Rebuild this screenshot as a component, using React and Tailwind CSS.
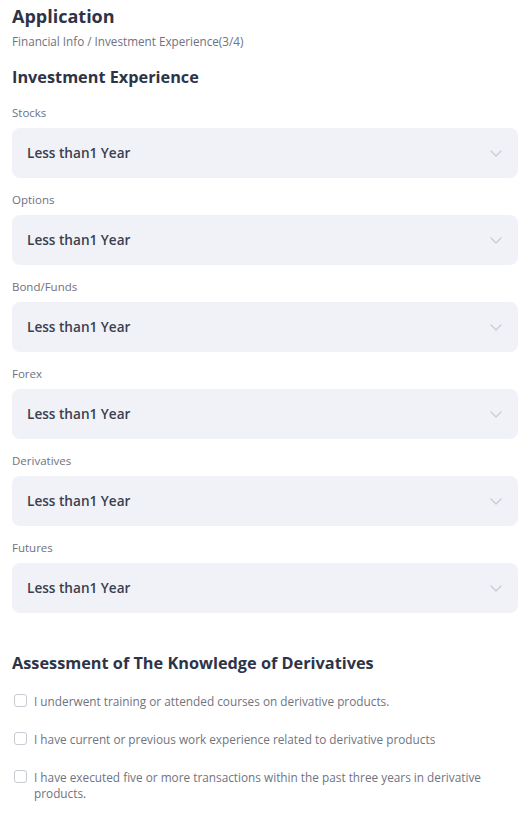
import React from "react";

const fields = ["Stocks", "Options", "Bond/Funds", "Forex", "Derivatives", "Futures"];
const checks = [
  "I underwent training or attended courses on derivative products.",
  "I have current or previous work experience related to derivative products",
  "I have executed five or more transactions within the past three years in derivative products.",
];

function Chevron() {
  return (
    <svg width="12" height="7" viewBox="0 0 12 7" fill="none">
      <path d="M1 1l5 5 5-5" stroke="#c9cbd3" strokeWidth="1.2" strokeLinecap="round" strokeLinejoin="round" />
    </svg>
  );
}

export default function App() {
  return (
    <div className="w-[528px] min-h-[815px] bg-white px-3 pt-[3px] text-[#2e3447]" style={{ fontFamily: '"Open Sans", "Noto Sans", sans-serif' }}>
      <h1 className="text-[18px] font-bold leading-[26px]">Application</h1>
      <p className="mt-[4px] text-[11.7px] leading-[16px] text-[#6e7282]">Financial Info / Investment Experience(3/4)</p>
      <h2 className="mt-[16px] text-[16.3px] font-bold leading-[24px]">Investment Experience</h2>
      <div className="flex flex-col">
        {fields.map((f, i) => (
          <div key={f} className="flex flex-col">
            <div className={(i === 0 ? "pt-[16px]" : "pt-[14px]") + " pb-[7px] text-[11.5px] leading-[16px] text-[#6e7282]"}>{f}</div>
            <div className="flex h-[50px] w-[506px] items-center justify-between rounded-[8px] bg-[#f1f2f7] pl-[15px] pr-[16px]">
              <span className="text-[13.6px] font-semibold text-[#3a3f4f]">Less than1 Year</span>
              <Chevron />
            </div>
          </div>
        ))}
      </div>
      <h2 className="mt-[38px] text-[16.3px] font-bold leading-[24px]">Assessment of The Knowledge of Derivatives</h2>
      <div className="mt-[18px] flex flex-col gap-[22px]">
        {checks.map((c) => (
          <label key={c} className="flex items-start gap-[7px] pl-[2px] pr-[30px]">
            <span className="mt-[1px] h-[13px] w-[13px] shrink-0 rounded-[3px] border border-[#c8cad2] bg-white" />
            <span className="text-[11.8px] leading-[16px] text-[#70747f]">{c}</span>
          </label>
        ))}
      </div>
    </div>
  );
}
